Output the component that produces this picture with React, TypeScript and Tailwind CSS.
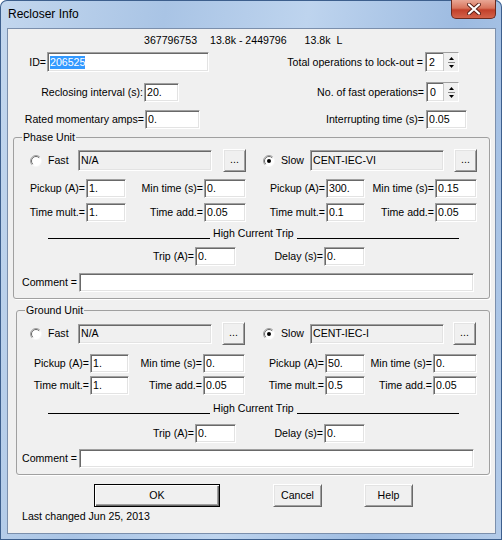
import type { ReactNode } from "react";

const sunken =
  "border border-t-[#a0a0a0] border-l-[#a0a0a0] border-b-white border-r-white shadow-[inset_1px_1px_0_#696969,inset_-1px_-1px_0_#e3e3e3]";
const raised =
  "bg-[#f0f0f0] border border-t-white border-l-white border-b-[#696969] border-r-[#696969] shadow-[inset_1px_1px_0_#e3e3e3,inset_-1px_-1px_0_#a0a0a0]";

function Field({ className = "", children, gray = false }: { className?: string; children?: ReactNode; gray?: boolean }) {
  return (
    <div
      className={`${sunken} ${gray ? "bg-[#f0f0f0]" : "bg-white"} ${className} flex items-center pl-[2px] overflow-hidden whitespace-nowrap`}
    >
      {children}
    </div>
  );
}

function Radio({ checked = false }: { checked?: boolean }) {
  return (
    <svg width="12" height="12" viewBox="0 0 12 12" className="shrink-0">
      <circle cx="6" cy="6" r="5.5" fill="#fff" />
      <path d="M2.1 9.9 A5.5 5.5 0 0 1 9.9 2.1" stroke="#a0a0a0" fill="none" />
      <path d="M2.8 9.2 A4.5 4.5 0 0 1 9.2 2.8" stroke="#696969" fill="none" />
      <path d="M9.9 2.1 A5.5 5.5 0 0 1 2.1 9.9" stroke="#f6f6f6" fill="none" />
      {checked && <circle cx="6" cy="6" r="2" fill="#000" />}
    </svg>
  );
}

function Spin({ value, className = "" }: { value: string; className?: string }) {
  return (
    <div className={`${sunken} bg-white ${className} flex items-stretch`}>
      <div className="flex-1 flex items-center pl-[3px]">{value}</div>
      <div className="w-[15px] bg-[#f0f0f0] border-l border-[#c8c8c8] flex flex-col items-center justify-center">
        <svg width="5" height="3" viewBox="0 0 5 3">
          <path d="M2.5 0 L5 3 L0 3 Z" fill="#000" />
        </svg>
        <div className="w-[7px] h-[1px] bg-[#8a8a8a] my-[2px]" />
        <svg width="5" height="3" viewBox="0 0 5 3">
          <path d="M0 0 L5 0 L2.5 3 Z" fill="#000" />
        </svg>
      </div>
    </div>
  );
}

function Btn({ children, className = "", def = false }: { children: ReactNode; className?: string; def?: boolean }) {
  if (def) {
    return (
      <div
        className={`bg-[#f0f0f0] border border-black shadow-[inset_1px_1px_0_#fff,inset_-1px_-1px_0_#696969,inset_-2px_-2px_0_#a0a0a0] flex items-center justify-center ${className}`}
      >
        {children}
      </div>
    );
  }
  return <div className={`${raised} flex items-center justify-center ${className}`}>{children}</div>;
}

type Cell = { label: string; value: string; lw: string; iw: string };

function FieldRow({ cells, className = "" }: { cells: Cell[]; className?: string }) {
  return (
    <div className={`flex items-center h-[19px] ${className}`}>
      {cells.map((c, i) => (
        <div key={i} className="flex items-center">
          <div className={`${c.lw} text-right pr-[1px] whitespace-nowrap`}>{c.label}</div>
          <Field className={`${c.iw} h-[19px]`}>{c.value}</Field>
        </div>
      ))}
    </div>
  );
}

function HighCurrent({ className = "" }: { className?: string }) {
  return (
    <div className={`flex items-end h-[13px] ${className}`}>
      <div className="w-[162px] h-[1px] bg-black mb-[1px]" />
      <div className="px-[3px] whitespace-nowrap">High Current Trip</div>
      <div className="w-[162px] h-[1px] bg-black mb-[1px]" />
    </div>
  );
}

export default function App() {
  return (
    <div className="font-['Liberation_Sans',Arial,sans-serif] text-[10.6px] leading-[13px] text-black w-[502px] h-[540px] overflow-hidden flex flex-col rounded-t-[7px] shadow-[inset_0_0_0_1px_#3d5f8d] bg-[linear-gradient(100deg,#c3d7ee_0%,#a9c4e5_28%,#bed4ee_52%,#9dbbe1_78%,#b3cbe9_100%)]">
      {/* title bar */}
      <div className="h-[28px] flex items-start">
        <div className="pl-[8px] pt-[7px] text-[12px] leading-[15px]">Recloser Info</div>
        <div className="ml-auto mr-[6px] w-[45px] h-[19px] rounded-b-[5px] border border-t-0 border-[#6b2a1e] bg-[linear-gradient(180deg,#e9a795_0%,#d8745c_45%,#c2402a_55%,#d3634a_100%)] flex items-center justify-center">
          <svg width="14" height="12" viewBox="0 0 14 12">
            <path d="M2 1.5 L12 10.5 M12 1.5 L2 10.5" stroke="#5a2118" strokeWidth="4" strokeLinecap="round" />
            <path d="M2 1.5 L12 10.5 M12 1.5 L2 10.5" stroke="#fff" strokeWidth="2.2" strokeLinecap="round" />
          </svg>
        </div>
      </div>

      {/* client */}
      <div className="ml-[7px] w-[489px] h-[506px] border border-[#7b8fac] bg-[#f0f0f0] flex flex-col">
        <div className="mt-[5px] h-[13px] flex pl-[136px] whitespace-pre">
          <span>367796753</span>
          <span className="ml-[13px]">13.8k - 2449796</span>
          <span className="ml-[18px]">13.8k  L</span>
        </div>

        <div className="mt-[5px] h-[20px] flex items-center">
          <div className="w-[39px] text-right pr-[1px]">ID=</div>
          <Field className="w-[162px] h-[20px]">
            <span className="bg-[#3399ff] text-white">206525</span>
          </Field>
          <div className="w-[216px] text-right pr-[2px] whitespace-nowrap">Total operations to lock-out =</div>
          <Spin value="2" className="w-[34px] h-[20px]" />
        </div>

        <div className="mt-[10px] h-[20px] flex items-center">
          <div className="w-[136px] text-right pr-[1px] whitespace-nowrap">Reclosing interval (s):</div>
          <Field className="w-[35px] h-[19px]">20.</Field>
          <div className="w-[247px] text-right pr-[2px] whitespace-nowrap">No. of fast operations=</div>
          <Spin value="0" className="w-[33px] h-[20px]" />
        </div>

        <div className="mt-[8px] h-[19px] flex items-center">
          <div className="w-[137px] text-right pr-[1px] whitespace-nowrap">Rated momentary amps=</div>
          <Field className="w-[55px] h-[19px]">0.</Field>
          <div className="w-[226px] text-right pr-[2px] whitespace-nowrap">Interrupting time (s)=</div>
          <Field className="w-[41px] h-[19px]">0.05</Field>
        </div>

        {/* Phase Unit */}
        <div className="relative mt-[8px] ml-[5px] w-[477px] h-[162px] shrink-0 border border-[#a0a0a0] rounded-[3px] shadow-[1px_1px_0_#fff] flex flex-col">
          <div className="absolute -top-[7px] left-[8px] px-[1px] bg-[#f0f0f0]">Phase Unit</div>
          <div className="mt-[11px] h-[23px] flex items-center">
            <div className="w-[64px] pl-[16px] flex items-center gap-[6px]">
              <Radio />
              <span>Fast</span>
            </div>
            <Field gray className="w-[134px] h-[21px]">N/A</Field>
            <Btn className="ml-[11px] w-[23px] h-[23px] pb-[3px]">...</Btn>
            <div className="w-[64px] pl-[17px] flex items-center gap-[6px]">
              <Radio checked />
              <span>Slow</span>
            </div>
            <Field gray className="w-[134px] h-[21px]">CENT-IEC-VI</Field>
            <Btn className="ml-[10px] w-[23px] h-[23px] pb-[3px]">...</Btn>
          </div>
          <FieldRow
            className="mt-[7px]"
            cells={[
              { label: "Pickup (A)=", value: "1.", lw: "w-[72px]", iw: "w-[40px]" },
              { label: "Min time (s)=", value: "0.", lw: "w-[78px]", iw: "w-[42px]" },
              { label: "Pickup (A)=", value: "300.", lw: "w-[80px]", iw: "w-[39px]" },
              { label: "Min time (s)=", value: "0.15", lw: "w-[70px]", iw: "w-[42px]" },
            ]}
          />
          <FieldRow
            className="mt-[5px]"
            cells={[
              { label: "Time mult.=", value: "1.", lw: "w-[72px]", iw: "w-[40px]" },
              { label: "Time add.=", value: "0.05", lw: "w-[78px]", iw: "w-[42px]" },
              { label: "Time mult.=", value: "0.1", lw: "w-[80px]", iw: "w-[39px]" },
              { label: "Time add.=", value: "0.05", lw: "w-[70px]", iw: "w-[42px]" },
            ]}
          />
          <HighCurrent className="mt-[5px] ml-[34px]" />
          <FieldRow
            className="mt-[7px]"
            cells={[
              { label: "Trip (A)=", value: "0.", lw: "w-[181px]", iw: "w-[41px]" },
              { label: "Delay (s)=", value: "0.", lw: "w-[88px]", iw: "w-[41px]" },
            ]}
          />
          <div className="mt-[7px] h-[19px] flex items-center">
            <div className="w-[65px] pl-[8px] whitespace-nowrap">Comment =</div>
            <Field className="w-[395px] h-[19px]" />
          </div>
        </div>

        {/* Ground Unit */}
        <div className="relative mt-[11px] ml-[8px] w-[474px] h-[165px] shrink-0 border border-[#a0a0a0] rounded-[3px] shadow-[1px_1px_0_#fff] flex flex-col">
          <div className="absolute -top-[7px] left-[8px] px-[1px] bg-[#f0f0f0]">Ground Unit</div>
          <div className="mt-[11px] h-[23px] flex items-center">
            <div className="w-[61px] pl-[13px] flex items-center gap-[6px]">
              <Radio />
              <span>Fast</span>
            </div>
            <Field gray className="w-[134px] h-[20px]">N/A</Field>
            <Btn className="ml-[10px] w-[23px] h-[23px] pb-[3px]">...</Btn>
            <div className="w-[65px] pl-[18px] flex items-center gap-[6px]">
              <Radio checked />
              <span>Slow</span>
            </div>
            <Field gray className="w-[134px] h-[20px]">CENT-IEC-I</Field>
            <Btn className="ml-[9px] w-[23px] h-[23px] pb-[3px]">...</Btn>
          </div>
          <FieldRow
            className="mt-[9px]"
            cells={[
              { label: "Pickup (A)=", value: "1.", lw: "w-[73px]", iw: "w-[39px]" },
              { label: "Min time (s)=", value: "0.", lw: "w-[74px]", iw: "w-[42px]" },
              { label: "Pickup (A)=", value: "50.", lw: "w-[80px]", iw: "w-[40px]" },
              { label: "Min time (s)=", value: "0.", lw: "w-[68px]", iw: "w-[44px]" },
            ]}
          />
          <FieldRow
            className="mt-[3px]"
            cells={[
              { label: "Time mult.=", value: "1.", lw: "w-[73px]", iw: "w-[39px]" },
              { label: "Time add.=", value: "0.05", lw: "w-[74px]", iw: "w-[42px]" },
              { label: "Time mult.=", value: "0.5", lw: "w-[80px]", iw: "w-[40px]" },
              { label: "Time add.=", value: "0.05", lw: "w-[68px]", iw: "w-[44px]" },
            ]}
          />
          <HighCurrent className="mt-[7px] ml-[31px]" />
          <FieldRow
            className="mt-[9px]"
            cells={[
              { label: "Trip (A)=", value: "0.", lw: "w-[178px]", iw: "w-[41px]" },
              { label: "Delay (s)=", value: "0.", lw: "w-[88px]", iw: "w-[41px]" },
            ]}
          />
          <div className="mt-[6px] h-[19px] flex items-center">
            <div className="w-[62px] pl-[5px] whitespace-nowrap">Comment =</div>
            <Field className="w-[395px] h-[19px]" />
          </div>
        </div>

        {/* buttons */}
        <div className="mt-[9px] h-[23px] flex items-center">
          <Btn def className="ml-[86px] w-[126px] h-[23px]">OK</Btn>
          <Btn className="ml-[53px] w-[49px] h-[23px]">Cancel</Btn>
          <Btn className="ml-[42px] w-[49px] h-[23px]">Help</Btn>
        </div>
        <div className="mt-[3px] pl-[14px]">Last changed Jun 25, 2013</div>
      </div>
    </div>
  );
}
